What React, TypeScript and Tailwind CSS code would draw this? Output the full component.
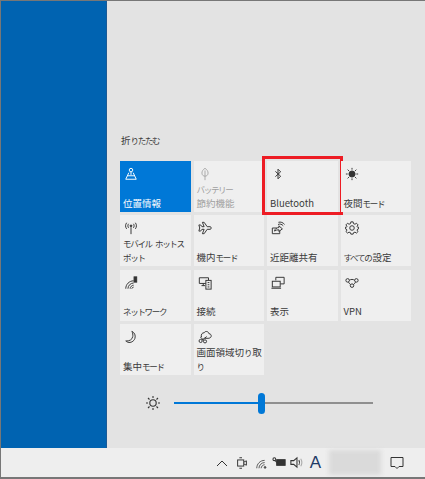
import React from "react";

const S = ({ children, size = 14, color = "#333" }: { children: React.ReactNode; size?: number; color?: string }) => (
  <svg width={size} height={size} viewBox="0 0 16 16" fill="none" stroke={color} strokeWidth={1.1} className="shrink-0">
    {children}
  </svg>
);

const Jp = ({ text }: { text: string }) => (
  <>
    {text.split(/([\u3040-\u30ff]+)/).map((part, n) =>
      /[\u3040-\u30ff]/.test(part) ? (
        <span key={n} className="text-[8.5px] tracking-[-1.3px] pr-[1px]">{part}</span>
      ) : (
        <span key={n}>{part}</span>
      )
    )}
  </>
);

const icons: Record<string, React.ReactNode> = {
  location: (
    <S color="#fff">
      <circle cx="8" cy="3.5" r="2" />
      <path d="M8 5.5V9M5.5 6.5L2 14H14L10.5 6.5M4 10H12" />
    </S>
  ),
  battery: (
    <S color="#a8a8a8">
      <path d="M8 1.5C5.5 3 4.5 5 4.5 7C4.5 9 6 10.5 8 10.5C10 10.5 11.5 9 11.5 7C11.5 5 10.5 3 8 1.5ZM8 4V15" />
    </S>
  ),
  bluetooth: (
    <S>
      <path d="M5 5L11 10.5L8 13.5V2.5L11 5.5L5 11" />
    </S>
  ),
  night: (
    <S>
      <circle cx="8" cy="8" r="3.5" fill="#333" />
      <path d="M8 1V3M8 13V15M1 8H3M13 8H15M3 3L4.5 4.5M11.5 11.5L13 13M13 3L11.5 4.5M4.5 11.5L3 13" />
    </S>
  ),
  hotspot: (
    <S>
      <path d="M8 7V15" />
      <circle cx="8" cy="5.5" r="1" fill="#333" />
      <path d="M5.2 3.2C4.2 4.6 4.2 6.4 5.2 7.8M10.8 3.2C11.8 4.6 11.8 6.4 10.8 7.8M3 2C1.4 4.2 1.4 6.8 3 9M13 2C14.6 4.2 14.6 6.8 13 9" />
    </S>
  ),
  plane: (
    <S>
      <path d="M1 4.500H3L4.500 6.500H7L5 1.500H7L10.500 6.500H14C15.400 6.500 15.400 9.500 14 9.500H10.500L7 14.500H5L7 9.500H4.500L3 11.500H1L2 8Z" />
    </S>
  ),
  share: (
    <S>
      <path d="M6.5 8H1.5V14.5H10V11M4 11.5C4.5 9 6.5 7.5 9 7.5V5.5L13 9L9 12V10C7 10 5.5 10.5 4 11.5Z" />
      <path d="M8 4C10 3 12.5 3.6 14 5.5M8.5 1.5C11 .7 14 1.8 15.5 4" />
    </S>
  ),
  gear: (
    <S>
      <circle cx="8" cy="8" r="2.6" />
      <path d="M6.700 1H9.300L9.700 3L11.400 3.700L13.100 2.600L14.900 4.400L13.800 6.100L14.500 7.200L15.500 7V9L14.500 9.200L13.800 10.400L14.900 12L13.100 13.800L11.400 12.700L9.700 13.400L9.300 15H6.700L6.300 13.400L4.600 12.700L2.900 13.800L1.100 12L2.200 10.400L1.500 9.200L.5 9V7L1.500 7.200L2.200 6.100L1.100 4.400L2.900 2.600L4.600 3.700L6.300 3Z" />
    </S>
  ),
  network: (
    <S>
      <path d="M2 14.500C2 9.500 6 5.500 11 5.500M4.500 14.500C4.500 11 7.500 8 11 8M7 14.500C7 12.500 9 10.500 11 10.500M9 14.500C9 13.500 10 12.700 11 12.700" />
      <rect x="11.500" y="1" width="3" height="6" fill="#333" />
    </S>
  ),
  connect: (
    <S>
      <path d="M9 8.500H1.500V2H12V5M4 11H8M6 8.500V11" />
      <rect x="9" y="5" width="6" height="10" fill="#efefef" />
      <path d="M11 7.500H13M11 10H13M11 12.500H13" />
    </S>
  ),
  display: (
    <S>
      <path d="M5.500 5V1.500H15V9H10.500" />
      <rect x="1.500" y="6" width="9" height="6.500" fill="#efefef" />
      <path d="M.5 14H11.500" />
    </S>
  ),
  vpn: (
    <S>
      <circle cx="3" cy="5" r="2" />
      <circle cx="13" cy="5" r="2" />
      <circle cx="8" cy="11" r="2" />
      <path d="M5 5C6.500 3.500 9.500 3.500 11 5M4 7C5 8.500 5.500 9.500 6.500 10M12 7C11 8.500 10.500 9.500 9.500 10" />
    </S>
  ),
  moon: (
    <S>
      <path d="M9 1.500C12 3 13.500 6 12.500 9.500C11.500 13 7.500 15 4.500 14C3.500 13.700 2.500 13 2 12.500C6 13 9.500 11 10 7.500C10.300 5.500 10 3.500 9 1.500Z" />
    </S>
  ),
  snip: (
    <S>
      <path d="M4 8C3 5 5 3 7 3.200C8 .9 12 1.200 12.500 4.200C14.500 4.200 15.500 6 15 7.500C14.500 9 13 9.500 11.500 9.500H7.500" />
      <circle cx="3" cy="12.500" r="1.800" />
      <circle cx="8" cy="13" r="1.800" />
      <path d="M4.500 11.500L10 7.500M2.500 8L6.800 11.700" />
    </S>
  ),
};

const tiles = [
  { i: "location", l: "位置情報", active: true },
  { i: "battery", l: "バッテリー\n節約機能", dim: true },
  { i: "bluetooth", l: "Bluetooth", marked: true },
  { i: "night", l: "夜間モード" },
  { i: "hotspot", l: "モバイル ホットス\nポット" },
  { i: "plane", l: "機内モード" },
  { i: "share", l: "近距離共有" },
  { i: "gear", l: "すべての設定" },
  { i: "network", l: "ネットワーク" },
  { i: "connect", l: "接続" },
  { i: "display", l: "表示" },
  { i: "vpn", l: "VPN" },
  { i: "moon", l: "集中モード" },
  { i: "snip", l: "画面領域切り取\nり" },
];

function Tile({ t }: { t: (typeof tiles)[number] }) {
  const tone = t.active ? "bg-[#0078d7] text-white" : t.dim ? "bg-[#efefef] text-[#a0a0a0]" : "bg-[#efefef] text-[#3a3a3a]";
  return (
    <div className={`relative flex h-[51px] flex-col justify-between px-[3px] pt-[6px] pb-[2px] ${tone}`}>
      {t.marked && <div className="absolute -top-[5px] -bottom-[3px] -left-[5px] -right-[5px] border-[3px] border-[#ed1c24]" />}
      <div className="pl-[1px]">{icons[t.i]}</div>
      <div className="whitespace-pre text-[9.5px] leading-[13.5px]"><Jp text={t.l} /></div>
    </div>
  );
}

export default function App() {
  return (
    <div className="flex h-[479px] w-[425px] flex-col overflow-hidden border-t border-b-2 border-l border-t-[#777] border-b-[#777] border-l-[#777] bg-[#e3e3e3] font-['Noto_Sans_CJK_JP','Noto_Sans',sans-serif]">
      <div className="flex min-h-0 flex-1">
        <div className="w-[106px] border-r border-r-[#1a5a96] bg-[#0063b1]" />
        <div className="flex flex-1 flex-col justify-end pl-[13px] pr-[14px] pb-[34px]">
          <div className="mb-[14px] pl-[1px] text-[9.5px] leading-[14px] text-[#3a3a3a]"><Jp text="折りたたむ" /></div>
          <div className="grid grid-cols-4 gap-x-[3px] gap-y-[3.33px]">
            {tiles.map((t) => (
              <Tile key={t.i} t={t} />
            ))}
          </div>
          <div className="mt-[17px] flex items-center pl-[25px]">
            <S size={16}>
              <circle cx="8" cy="8" r="3.200" />
              <path d="M8 1V3M8 13V15M1 8H3M13 8H15M3 3L4.500 4.500M11.500 11.500L13 13M13 3L11.500 4.500M4.500 11.500L3 13" />
            </S>
            <div className="ml-[13px] flex h-[22px] w-[199px] items-center">
              <div className="h-[2px] w-[84px] bg-[#0078d7]" />
              <div className="h-[21px] w-[7px] rounded-[4px] bg-[#0078d7]" />
              <div className="h-[2px] flex-1 bg-[#8f8f8f]" />
            </div>
          </div>
        </div>
      </div>
      <div className="flex h-[29px] items-center bg-[#eeeeee] pl-[215px] text-[#333333]">
        <svg width="12" height="8" viewBox="0 0 12 8" fill="none" stroke="#333" className="mr-[7px]"><path d="M1 7L6 2L11 7" /></svg>
        <div className="mr-[6px]"><S size={14}><rect x="3" y="4.500" width="7" height="7" /><path d="M10 7L13 5.500V10.500L10 9M5 2H8M5 14H8" /></S></div>
        <div className="mr-[3px]"><S size={14} color="#555"><path d="M2 14C2 9 6 5 11 5M4.500 14C4.500 10.500 7.500 7.500 11 7.500M7 14C7 12 9 10 11 10" /><circle cx="11.500" cy="13" r="1" fill="#333" /></S></div>
        <div className="mr-[2px]"><S size={15}><rect x="5" y="5" width="9" height="6" fill="#333" /><circle cx="2.500" cy="4.500" r="1.500" /><path d="M3.500 6L5 8" /></S></div>
        <div className="mr-[4px]"><S size={15}><path d="M2 6H5L8.500 3V13L5 10H2Z" /><path d="M10.500 5.500C11.500 7 11.500 9 10.500 10.500" /><path d="M12.500 4C14 6.500 14 9.500 12.500 12" stroke="#aaa" /></S></div>
        <div className="w-[15px] text-center font-['Liberation_Sans'] text-[17px] leading-none text-[#1f3a66]">A</div>
        <div className="ml-[6px] h-[25px] w-[52px] bg-[#dadada] blur-[2px]" />
        <svg width="14" height="14" viewBox="0 0 14 14" fill="none" stroke="#333" className="ml-[9px]"><path d="M1 1.500H13V10.500H9L7 12.500L5 10.500H1Z" /></svg>
      </div>
    </div>
  );
}
